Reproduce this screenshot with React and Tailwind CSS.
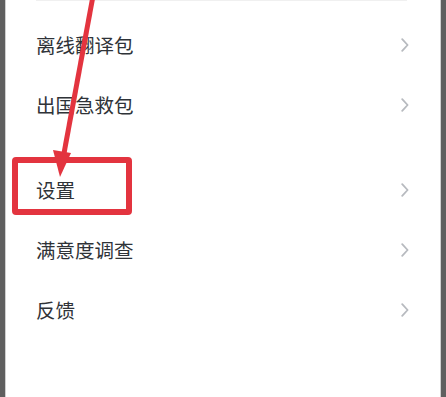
const SECTIONS = [
  ['离线翻译包', '出国急救包'],
  ['设置', '满意度调查', '反馈'],
]

function Chevron() {
  return (
    <svg width="8" height="14" viewBox="0 0 8 14" fill="none" className="shrink-0">
      <path d="M1.2 1.2 L6.6 7 L1.2 12.8" stroke="#b7babf" strokeWidth="1.8" strokeLinecap="round" strokeLinejoin="round" />
    </svg>
  )
}

function Row({ label }) {
  return (
    <div className="flex h-[60px] items-center justify-between pl-[30px] pr-[31px]">
      <span className="text-[19.5px] leading-none text-[#2f3338]">{label}</span>
      <Chevron />
    </div>
  )
}

export default function App() {
  return (
    <div
      className="relative flex h-[397px] w-[446px] overflow-hidden bg-white"
      style={{ fontFamily: '"Noto Sans CJK SC", "Noto Sans", sans-serif' }}
    >
      <div className="w-[5px] bg-[#5f5f5f]" />
      <div className="w-px bg-[#cfcfcf]" />

      <main className="flex-1">
        <div className="ml-[30px] mr-[33px] h-px bg-[#f0f0f0]" />
        <div className="pt-[14px]">
          {SECTIONS[0].map((label) => (
            <Row key={label} label={label} />
          ))}
        </div>
        <div className="pt-[25px]">
          {SECTIONS[1].map((label) => (
            <Row key={label} label={label} />
          ))}
        </div>
      </main>

      <div className="w-px bg-[#cfcfcf]" />
      <div className="w-[5px] bg-[#5f5f5f]" />

      {/* annotation: red box + arrow */}
      <div className="pointer-events-none absolute left-[12px] top-[157px] h-[58px] w-[120px] rounded-[4px] border-[6px] border-[#e3343f]" />
      <svg className="pointer-events-none absolute inset-0" width="446" height="397" viewBox="0 0 446 397">
        <line x1="93" y1="-4" x2="63.5" y2="156" stroke="#e3343f" strokeWidth="5" />
        <polygon points="53,150 71,153 60,177" fill="#e3343f" />
      </svg>
    </div>
  )
}
